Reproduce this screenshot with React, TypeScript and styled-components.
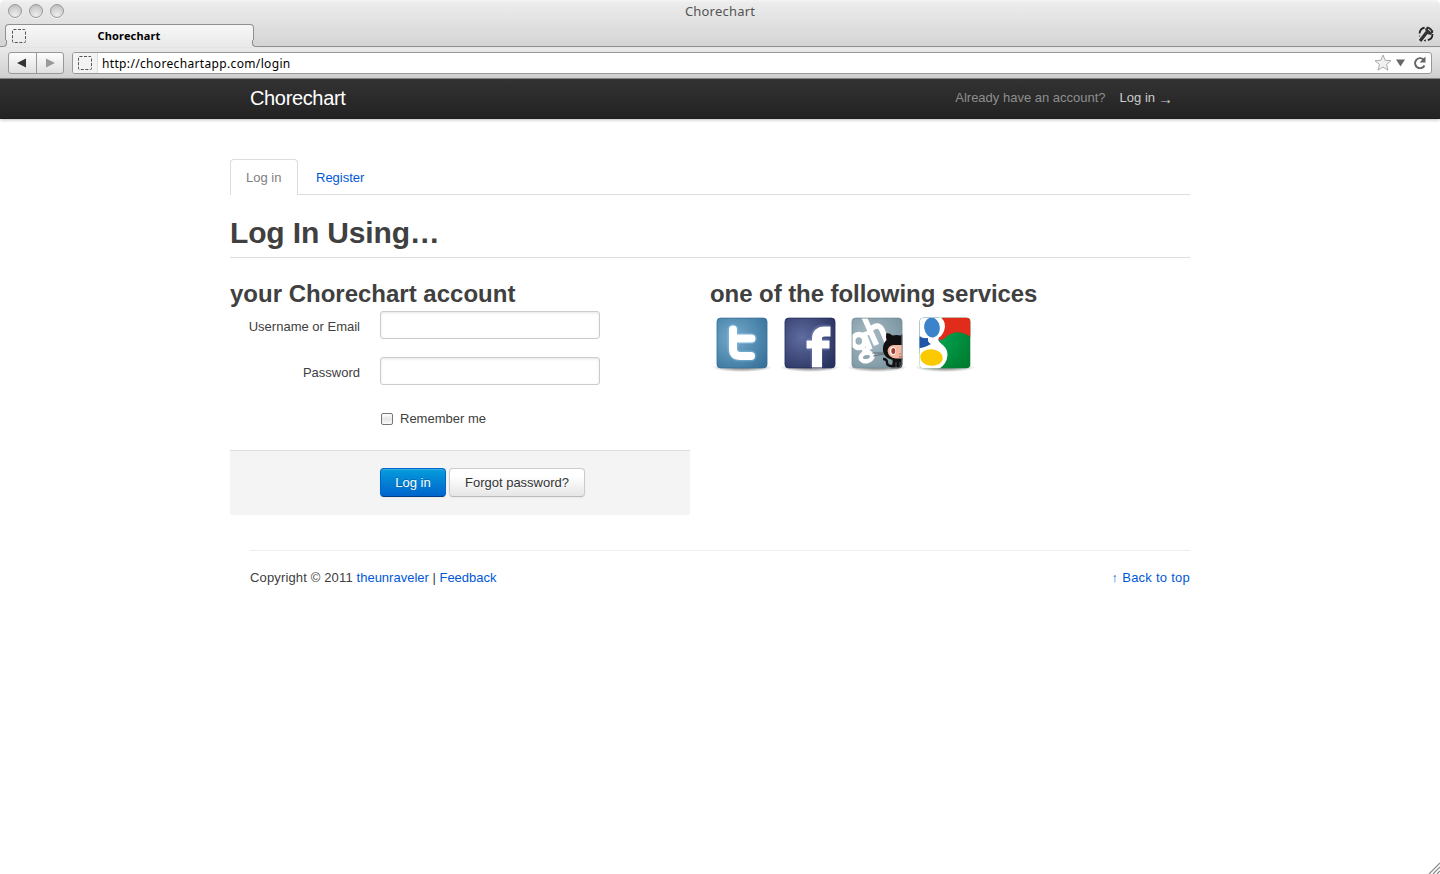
import React from 'react';
import styled, { createGlobalStyle, css } from 'styled-components';

const GlobalStyle = createGlobalStyle`
  * { box-sizing: border-box; }
  html, body { margin: 0; background: #fff; }
  body { font: 13px/18px "Liberation Sans", Arial, sans-serif; color: #404040; overflow: hidden; }
  h1, h2 { margin: 0; font-weight: bold; color: #404040; }
  a { color: #0058d8; text-decoration: none; }
`;

const Page = styled.div`
  position: relative;
  height: 874px;
  overflow: hidden;
`;

/* Browser window */
const Chrome = styled.div`
  height: 79px;
  border-radius: 5px 5px 0 0;
  background: linear-gradient(#f4f4f4 0, #ececec 3px, #d4d4d4 46px, #e9e9e9 48px, #d0d0d0 77px);
  border-bottom: 1px solid #888;
  display: flex;
  flex-direction: column;
  font-family: "Noto Sans", sans-serif;
`;
const TitleBar = styled.div`
  height: 24px;
  flex: none;
  display: grid;
  grid-template-columns: 100px 1fr 100px;
  align-items: center;
`;
const Lights = styled.div`
  display: flex;
  gap: 7px;
  padding-left: 8px;
  margin-top: -2px;
`;
const Light = styled.i`
  width: 14px;
  height: 14px;
  border-radius: 50%;
  border: 1px solid #999;
  background: radial-gradient(circle at 50% 85%, #eee, #d0d0d0 60%, #b4b4b4);
  box-shadow: 0 1px 0 #f6f6f6;
`;
const WindowTitle = styled.div`
  text-align: center;
  font-size: 13px;
  line-height: 22px;
  margin-top: -3px;
  color: #555;
  letter-spacing: 0.2px;
`;
const TabStrip = styled.div`
  height: 23px;
  flex: none;
  display: flex;
  align-items: flex-start;
  justify-content: space-between;
  border-bottom: 1px solid #8f8f8f;
  padding: 0 5px;
`;
const BrowserTab = styled.div`
  position: relative;
  width: 249px;
  height: 23px;
  margin-bottom: -1px;
  border: 1px solid #8f8f8f;
  border-bottom: 0;
  border-radius: 4px 4px 0 0;
  background: linear-gradient(#f7f7f7, #e9e9e9);
  display: grid;
  grid-template-columns: 26px 1fr 27px;
  align-items: center;
  &::before, &::after {
    content: "";
    position: absolute;
    bottom: 0;
    width: 5px;
    height: 6px;
    border: 0 solid #8f8f8f;
    border-bottom-width: 1px;
    background: #d5d5d5;
  }
  &::before { left: -5px; border-right-width: 1px; border-bottom-right-radius: 4px; box-shadow: 1px 1px 0 #e9e9e9; }
  &::after { right: -5px; border-left-width: 1px; border-bottom-left-radius: 4px; box-shadow: -1px 1px 0 #e9e9e9; }
`;
const TabLabel = styled.b`
  font-size: 11px;
  line-height: 20px;
  color: #000;
  text-align: center;
  letter-spacing: 0.15px;
`;
const Toolbar = styled.div`
  flex: 1;
  display: flex;
  align-items: center;
  gap: 8px;
  padding: 0 8px;
`;
const NavButtons = styled.div`
  width: 56px;
  height: 22px;
  display: flex;
  border: 1px solid #989898;
  border-radius: 3px;
  background: linear-gradient(#fdfdfd, #e0e0e0);
`;
const NavButton = styled.span`
  flex: 1;
  display: flex;
  align-items: center;
  justify-content: center;
  & + & { border-left: 1px solid #989898; }
`;
const AddressBar = styled.div`
  flex: 1;
  height: 22px;
  display: flex;
  align-items: center;
  border: 1px solid #989898;
  border-radius: 3px;
  background: #fff;
  overflow: hidden;
`;
const SiteIcon = styled.span`
  width: 25px;
  height: 20px;
  background: #f3f3f3;
  border-right: 1px solid #ddd;
  display: flex;
  align-items: center;
  justify-content: center;
`;
const Url = styled.span`
  flex: 1;
  padding: 2px 0 0 4px;
  color: #000;
  font-size: 12px;
  line-height: 20px;
  letter-spacing: 0.34px;
`;
const AddressTools = styled.span`
  display: flex;
  align-items: center;
  gap: 4px;
  padding-right: 2px;
`;

/* Site */
const TopBar = styled.header`
  height: 40px;
  background: linear-gradient(#333, #222);
  box-shadow: 0 1px 3px rgba(0, 0, 0, .25), inset 0 -1px 0 rgba(0, 0, 0, .1);
`;
const TopBarInner = styled.div`
  width: 940px;
  margin: 0 auto;
  height: 38px;
  display: flex;
  align-items: center;
  justify-content: space-between;
  padding-right: 17px;
`;
const Brand = styled.a`
  font-size: 20px;
  line-height: 20px;
  color: #fff;
  letter-spacing: -0.35px;
`;
const Account = styled.div`
  display: flex;
  height: 18px;
  gap: 14px;
  color: #8e8e8e;
  a { color: #ccc; display: flex; gap: 3px; }
`;
const Arrow = styled.span`
  font-family: "Liberation Sans", sans-serif;
  font-size: 15px;
  line-height: 19px;
`;
const Container = styled.main`
  width: 960px;
  margin-left: 230px;
  padding-top: 40px;
`;
const Tabs = styled.nav`
  display: flex;
  height: 36px;
  border-bottom: 1px solid #ddd;
`;
const Tab = styled.a<{ $active?: boolean }>`
  height: 36px;
  line-height: 34px;
  padding: 1px 15px;
  border: 1px solid transparent;
  border-bottom: 0;
  border-radius: 4px 4px 0 0;
  margin-right: 2px;
  ${p => p.$active && css`
    width: 68px;
    background: #fff;
    border-color: #ddd;
    color: #808080;
  `}
`;
const PageHeader = styled.div`
  height: 63px;
  padding-top: 19px;
  border-bottom: 1px solid #ddd;
  h1 { font-size: 30px; line-height: 37px; letter-spacing: -0.15px; }
`;
const Columns = styled.div`
  display: grid;
  grid-template-columns: 460px 460px;
  gap: 20px;
  padding-top: 18px;
`;
const SectionTitle = styled.h2<{ $track?: number }>`
  font-size: 24px;
  line-height: 35px;
  letter-spacing: ${p => p.$track ?? 0}px;
`;
const Field = styled.div`
  display: grid;
  grid-template-columns: 130px 220px;
  gap: 20px;
  height: 28px;
  margin-bottom: 18px;
  label { text-align: right; line-height: 32px; }
`;
const Input = styled.input`
  height: 28px;
  border: 1px solid #ccc;
  border-radius: 3px;
  box-shadow: inset 0 1px 3px rgba(0, 0, 0, .1);
`;
const Remember = styled.label`
  display: flex;
  align-items: center;
  gap: 7px;
  height: 18px;
  margin: 25px 0 22px 151px;
`;
const Checkbox = styled.input`
  appearance: none;
  width: 12px;
  height: 12px;
  margin: 0;
  border: 1px solid #777;
  border-radius: 2px;
  background: linear-gradient(#fff, #e6e6e6 50%, #fafafa);
`;
const Actions = styled.div`
  height: 65px;
  padding: 17px 0 0 150px;
  display: flex;
  gap: 3px;
  background: #f4f4f4;
  border-top: 1px solid #ddd;
  border-radius: 0 0 3px 3px;
`;
const Button = styled.button<{ $primary?: boolean; $width: number }>`
  width: ${p => p.$width}px;
  height: 29px;
  padding: 0;
  font: 13px/18px "Liberation Sans", Arial, sans-serif;
  white-space: nowrap;
  color: #333;
  border: 1px solid #ccc;
  border-bottom-color: #bbb;
  border-radius: 4px;
  background: linear-gradient(#fff, #fff 25%, #e6e6e6);
  text-shadow: 0 1px 1px rgba(255, 255, 255, .75);
  box-shadow: inset 0 1px 0 rgba(255, 255, 255, .2), 0 1px 2px rgba(0, 0, 0, .05);
  ${p => p.$primary && css`
    color: #fff;
    border-color: #0064cd #0064cd #003f81;
    background: linear-gradient(#049cdb, #0064cd);
    text-shadow: 0 -1px 0 rgba(0, 0, 0, .25);
  `}
`;
const Services = styled.div`
  display: flex;
  padding-left: 1px;
  gap: 3.6px;
`;
const Footer = styled.footer`
  width: 940px;
  margin: 35px 0 0 250px;
  padding-top: 18px;
  border-top: 1px solid #eee;
  display: flex;
  justify-content: space-between;
`;
const Tracked = styled.span<{ $by: number }>`
  letter-spacing: ${p => p.$by}px;
`;
const Grip = styled.svg`
  position: absolute;
  right: 0;
  bottom: 0;
`;

const Placeholder = () => (
  <svg width="14" height="14"><rect x=".5" y=".5" width="13" height="13" rx="1" fill="none" stroke="#555" strokeDasharray="3 1.5" /></svg>
);

type TileProps = { id: string; from: string; to: string; edge?: boolean; children: React.ReactNode };
const Tile = ({ id, from, to, edge = true, children }: TileProps) => (
  <svg width="64" height="64" viewBox="0 0 64 64">
    <defs>
      <radialGradient id={id} cx=".35" cy=".4" r=".75"><stop offset="0" stopColor={from} /><stop offset="1" stopColor={to} /></radialGradient>
      <radialGradient id={id + 's'}><stop offset=".3" stopColor="#000" stopOpacity=".42" /><stop offset="1" stopColor="#000" stopOpacity="0" /></radialGradient>
      <clipPath id={id + 'c'}><rect x="5.700" y="6.800" width="50.600" height="50.400" rx="4" /></clipPath>
    </defs>
    <ellipse cx="31" cy="56.500" rx="30" ry="4.500" fill={`url(#${id}s)`} />
    <g clipPath={`url(#${id}c)`}>
      <rect x="5" y="6" width="52" height="52" fill={`url(#${id})`} />
      {children}
    </g>
    {edge && <rect x="6.200" y="7.300" width="49.600" height="49.400" rx="3.500" fill="none" stroke={to} strokeOpacity=".7" />}
  </svg>
);

const TwitterTile = () => (
  <Tile id="tw" from="#75abcc" to="#39739c">
    <g fill="none" strokeLinecap="round" strokeLinejoin="round">
      <path d="M22 18.500v19q0 7.500 7.500 7.500H40M22 27.500h18.500" stroke="#9cdcfa" strokeOpacity=".3" strokeWidth="11" />
      <path d="M22 18.500v19q0 7.500 7.500 7.500H40M22 27.500h18.500" stroke="#fff" strokeWidth="8" />
    </g>
  </Tile>
);

const FacebookTile = () => (
  <Tile id="fb" from="#5f6c9f" to="#28325f">
    <path d="M37.500 58V26.500q0-7 7.500-7h6.500M28 33.500h22.500" fill="none" stroke="#8f9cd0" strokeOpacity=".3" strokeWidth="12" />
    <path d="M38 58V28q0-7.500 7.500-7.500H51.500" fill="none" stroke="#fff" strokeWidth="10" />
    <path d="M27.500 33.500h23" fill="none" stroke="#fff" strokeWidth="8" />
  </Tile>
);

const GithubTile = () => (
  <Tile id="gh" from="#a9bdc6" to="#78929e">
    <g fill="none" stroke="#fff" strokeWidth="5.500">
      <ellipse cx="12.800" cy="30" rx="6" ry="6.500" />
      <path d="M17.500 22.500l6.500 16" />
      <path d="M16 24l7.500-2.500" strokeWidth="4" />
      <ellipse cx="20.500" cy="46" rx="6" ry="4.200" transform="rotate(-14 20.500 46)" strokeWidth="4.500" />
      <path d="M16 39.500l8-2" strokeWidth="4" />
      <path d="M18 6l12.500 28M24 19q8-8 12 0l5 12" />
    </g>
    <path d="M26 42l11 0M27 45l11-2" stroke="#39454b" strokeWidth=".6" />
    <path d="M37 48q4 0 4 3.500t5 3.500" fill="none" stroke="#111" strokeWidth="2.400" />
    <path d="M46 47h12v11H44q4-4 2-11z" fill="#111" />
    <path d="M40.500 22q4 0 6 2.500 4-1.200 8 0l3-2V49H48q-8-1-10.500-7-2-8 3-13-1-4 0-7z" fill="#111" />
    <path d="M58 34H47q-5 1-5.500 6 1 7 8 7.500H58z" fill="#f3b9a0" />
    <ellipse cx="47" cy="40" rx="3" ry="4" fill="#fff" />
    <ellipse cx="47.300" cy="40" rx="2" ry="3" fill="#a43a30" />
    <path d="M53 45.500q1.500 1 3 .3" stroke="#c94d3e" fill="none" />
    <circle cx="54" cy="43" r=".7" fill="#c94d3e" />
    <path d="M50 51v7M54 51v7" stroke="#6b6b6b" strokeWidth=".7" />
  </Tile>
);

const GoogleTile = () => (
  <Tile id="gg" from="#00a652" to="#007d31" edge={false}>
    <path d="M28 6h30v21q-16-12-28 1l-6 2z" fill="#e22c1b" />
    <path d="M5 6h20v24L14 40 5 42z" fill="#1f57a8" />
    <path d="M5 6h21q5 3 5 9.500-1 8-6 11-2 3 2 6 7 5 6.500 12-1 9-8.500 13.500H5V37q7-1 11-4-3-2-2-6-6 1-9-3z" fill="#fff" />
    <path d="M5 26q4 3 9 1-1 4 3 6-5 3-12 4z" fill="#1f57a8" />
    <ellipse cx="18" cy="16.500" rx="7.800" ry="10" fill="#3b83ca" transform="rotate(-8 18 16.500)" />
    <ellipse cx="17.500" cy="46.500" rx="11.300" ry="8.300" fill="#fbc900" transform="rotate(5 17.500 46.500)" />
  </Tile>
);

const PluginIcon = () => (
  <svg width="18" height="18" viewBox="0 0 18 18">
    <circle cx="9" cy="10" r="6.500" fill="none" stroke="#222" strokeWidth="1.800" strokeDasharray="8 2.200" />
    <path d="M2 18 10 8" stroke="#e4e4e4" strokeWidth="6" />
    <path d="M3 17 10 8" stroke="#333" strokeWidth="3.400" />
    <path d="M8 5l3-2.500 5.500 4.500-2.500 4-4-1z" fill="#333" />
    <path d="M11 5l3 2.500" stroke="#eee" />
  </svg>
);

export default function App() {
  return (
    <Page>
      <GlobalStyle />
      <Chrome>
        <TitleBar>
          <Lights><Light /><Light /><Light /></Lights>
          <WindowTitle>Chorechart</WindowTitle>
        </TitleBar>
        <TabStrip>
          <BrowserTab>
            <svg width="26" height="14"><g transform="translate(6)"><Placeholder /></g></svg>
            <TabLabel>Chorechart</TabLabel>
          </BrowserTab>
          <PluginIcon />
        </TabStrip>
        <Toolbar>
          <NavButtons>
            <NavButton><svg width="10" height="10"><path d="M0 5 9 .5v9z" fill="#333" /></svg></NavButton>
            <NavButton><svg width="10" height="10"><path d="M10 5 1 .5v9z" fill="#999" /></svg></NavButton>
          </NavButtons>
          <AddressBar>
            <SiteIcon><Placeholder /></SiteIcon>
            <Url>http://chorechartapp.com/login</Url>
            <AddressTools>
              <svg width="18" height="18" viewBox="0 0 18 18"><path d="M9 1l2.200 5.300 5.800.4-4.400 3.700 1.400 5.800-5-3.200-5 3.200 1.400-5.800L1 6.700l5.800-.4z" fill="#f0f0f0" stroke="#aaa" /></svg>
              <svg width="9" height="8"><path d="M0 .5h9L4.500 7.500z" fill="#666" /></svg>
              <svg width="20" height="16" viewBox="0 0 20 16"><path d="M15.500 10.500a5 5 0 1 1-1-6" fill="none" stroke="#666" strokeWidth="1.900" /><path d="M16.500 1.500v6H10.500z" fill="#666" /></svg>
            </AddressTools>
          </AddressBar>
        </Toolbar>
      </Chrome>
      <TopBar>
        <TopBarInner>
          <Brand>Chorechart</Brand>
          <Account><span>Already have an account?</span><a><span>Log in</span> <Arrow>→</Arrow></a></Account>
        </TopBarInner>
      </TopBar>
      <Container>
        <Tabs><Tab $active>Log in</Tab><Tab>Register</Tab></Tabs>
        <PageHeader><h1>Log In Using…</h1></PageHeader>
        <Columns>
          <section>
            <SectionTitle>your Chorechart account</SectionTitle>
            <Field><label>Username or Email</label><Input /></Field>
            <Field><label>Password</label><Input type="password" /></Field>
            <Remember><Checkbox type="checkbox" />Remember me</Remember>
            <Actions>
              <Button $primary $width={66}>Log in</Button>
              <Button $width={136}>Forgot password?</Button>
            </Actions>
          </section>
          <section>
            <SectionTitle $track={-0.07}>one of the following services</SectionTitle>
            <Services>
              <TwitterTile />
              <FacebookTile />
              <GithubTile />
              <GoogleTile />
            </Services>
          </section>
        </Columns>
      </Container>
      <Footer>
        <span><Tracked $by={0.15}>Copyright © 2011 </Tracked><a>theunraveler</a> | <a>Feedback</a></span>
        <a><Tracked $by={0.25}>↑ Back to top</Tracked></a>
      </Footer>
      <Grip width="12" height="12"><path d="M1 12 12 1M5 12l7-7M9 12l3-3" stroke="#888" strokeWidth="1.200" /></Grip>
    </Page>
  );
}
